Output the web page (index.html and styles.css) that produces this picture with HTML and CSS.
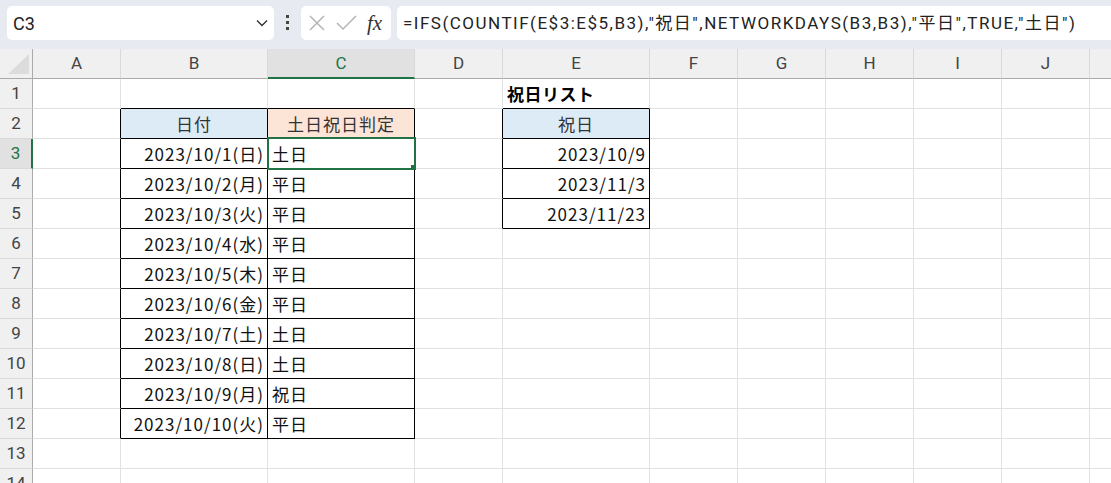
FILE: index.html
```html
<!DOCTYPE html>
<html lang="ja">
<head>
    <meta charset="UTF-8">
    <meta name="viewport" content="width=device-width, initial-scale=1.0">
    <title>土日祝日判定</title>
    <link rel="stylesheet" href="styles.css">
</head>
<body>

<div class="topbar">
    <div class="namebox">
        <span>C3</span>
        <svg class="chevron" width="12" height="8" viewBox="0 0 12 8"><path d="M1 1.5 L6 6.5 L11 1.5" fill="none" stroke="#333" stroke-width="1.4"/></svg>
    </div>
    <div class="dots"><i></i><i></i><i></i></div>
    <div class="fxbox">
        <svg width="18" height="18" viewBox="0 0 18 18"><path d="M2 2 L16 16 M16 2 L2 16" stroke="#b5b5b5" stroke-width="1.5" fill="none"/></svg>
        <svg width="21" height="18" viewBox="0 0 21 18"><path d="M1 9 L7 15 L20 2" stroke="#b5b5b5" stroke-width="1.5" fill="none"/></svg>
        <span class="fx">fx</span>
    </div>
    <div class="formula">=IFS(COUNTIF(E$3:E$5,B3),"祝日",NETWORKDAYS(B3,B3),"平日",TRUE,"土日")</div>
</div>

<div class="sheet" id="sheet">
    <!-- ячейки строятся скриптом -->
    <div class="sel"><i class="handle"></i></div>
</div>

<script>
    // последний столбец виден лишь краем, без буквы
    const cols = ['A', 'B', 'C', 'D', 'E', 'F', 'G', 'H', 'I', 'J', ''];
    const rowCount = 14;

    const days = ['日', '月', '火', '水', '木', '金', '土', '日', '月', '火'];
    const kinds = ['土日', '平日', '平日', '平日', '平日', '平日', '土日', '土日', '祝日', '平日'];

    // значения ячеек
    const cells = {
        B2: { text: '日付', cls: 'c fill-blue' },
        C2: { text: '土日祝日判定', cls: 'c fill-orange' },
        E1: { text: '祝日リスト', cls: 'b' },
        E2: { text: '祝日', cls: 'c fill-blue' },
        E3: { text: '2023/10/9', cls: 'r' },
        E4: { text: '2023/11/3', cls: 'r' },
        E5: { text: '2023/11/23', cls: 'r' }
    };
    days.forEach((d, i) => {
        cells['B' + (i + 3)] = { text: '2023/10/' + (i + 1) + '(' + d + ')', cls: 'r' };
        cells['C' + (i + 3)] = { text: kinds[i], cls: '' };
    });

    // диапазоны с рамкой
    const ranges = [[1, 2, 2, 12], [4, 2, 4, 5]];

    function inRange(c, r) {
        return ranges.some(g => c >= g[0] && c <= g[2] && r >= g[1] && r <= g[3]);
    }

    const sheet = document.getElementById('sheet');
    const sel = sheet.querySelector('.sel');

    function add(cls, text) {
        const div = document.createElement('div');
        div.className = cls;
        div.textContent = text || '';
        sheet.insertBefore(div, sel);
    }

    add('corner');
    cols.forEach(c => add(c === 'C' ? 'colhead active' : 'colhead', c));

    for (let r = 1; r <= rowCount; r++) {
        add(r === 3 ? 'rowhead active' : 'rowhead', r);
        cols.forEach((c, ci) => {
            const item = cells[c + r] || { text: '', cls: '' };
            let cls = 'cell ' + item.cls;
            if (inRange(ci, r)) cls += ' bx';
            if (inRange(ci, r + 1)) cls += ' bt';
            if (inRange(ci + 1, r)) cls += ' bl';
            add(cls, item.text);
        });
    }
</script>

</body>
</html>
```

FILE: styles.css
```css
body {
    margin: 0;
    width: 1111px;
    height: 483px;
    overflow: hidden;
    background-color: #fff;
    font-family: Roboto, "Noto Sans CJK JP", sans-serif;
}

.topbar {
    display: flex;
    align-items: flex-start;
    height: 49px;
    padding: 6px 0 0 7px;
    box-sizing: border-box;
    background-color: #e7eaf0;
}

.namebox {
    display: flex;
    justify-content: space-between;
    align-items: center;
    width: 267px;
    height: 34px;
    padding: 0 6px 0 6px;
    box-sizing: border-box;
    background-color: #fff;
    border-radius: 5px;
    font-size: 18px;
    color: #222;
}

.dots {
    display: flex;
    flex-direction: column;
    align-items: center;
    gap: 3px;
    width: 27px;
    padding-top: 9px;
}

.dots i {
    width: 3px;
    height: 3px;
    background-color: #444;
}

.fxbox {
    display: flex;
    align-items: center;
    gap: 10px;
    width: 90px;
    height: 34px;
    padding-left: 7px;
    box-sizing: border-box;
    background-color: #fff;
    border-radius: 5px;
}

.fx {
    font-family: "Liberation Serif", serif;
    font-style: italic;
    font-size: 21px;
    color: #333;
}

.formula {
    flex: 1;
    height: 34px;
    margin: 0 -10px 0 6px;
    padding-left: 6px;
    background-color: #fff;
    border-radius: 5px;
    font-size: 17px;
    line-height: 34px;
    letter-spacing: 1.5px;
    color: #222;
    white-space: nowrap;
}

.sheet {
    position: relative;
    display: grid;
    grid-template-columns: 33px 88px 147px 147px 88px 147px 88px 88px 88px 88px 88px 88px;
    grid-auto-rows: 30px;
    width: 1111px;
    height: 434px;
    overflow: hidden;
}

.sheet > div {
    box-sizing: border-box;
    white-space: nowrap;
    overflow: hidden;
}

.corner {
    position: relative;
    background-color: #f0f0f0;
    border-right: 1px solid #ababab;
    border-bottom: 1px solid #ababab;
}

.corner::after {
    content: "";
    position: absolute;
    right: 3px;
    bottom: 4px;
    width: 0;
    height: 0;
    border-left: 21px solid transparent;
    border-bottom: 20px solid #dcdcdc;
}

.colhead {
    background-color: #f0f0f0;
    border-right: 1px solid #d9d9d9;
    border-bottom: 1px solid #ababab;
    text-align: center;
    font-size: 17px;
    line-height: 29px;
    color: #444;
}

.colhead.active {
    background-color: #e1e1e1;
    border-bottom: 2px solid #217346;
    color: #217346;
}

.rowhead {
    background-color: #f0f0f0;
    border-right: 1px solid #ababab;
    border-bottom: 1px solid #d9d9d9;
    text-align: center;
    font-size: 17px;
    line-height: 29px;
    color: #444;
}

.rowhead.active {
    background-color: #e1e1e1;
    border-right: 2px solid #217346;
    color: #217346;
}

.cell {
    padding: 0 4px;
    border-right: 1px solid #e1e1e1;
    border-bottom: 1px solid #e1e1e1;
    font-family: "Noto Sans CJK JP", sans-serif;
    font-size: 17px;
    line-height: 29px;
    letter-spacing: 1px;
    color: #111;
}

.cell.r {
    text-align: right;
    padding-right: 3px;
}

.cell.c {
    text-align: center;
    color: #333;
}

.cell.b {
    font-weight: bold;
    letter-spacing: 0.5px;
    color: #000;
}

.fill-blue {
    background-color: #ddebf7;
}

.fill-orange {
    background-color: #fce4d6;
}

.cell.bx {
    border-right-color: #000;
    border-bottom-color: #000;
}

.cell.bt {
    border-bottom-color: #000;
}

.cell.bl {
    border-right-color: #000;
}

/* выделенная ячейка C3 */
.sel {
    position: absolute;
    left: 267px;
    top: 88px;
    width: 149px;
    height: 33px;
    border: 2px solid #217346;
    box-sizing: border-box;
}

.handle {
    position: absolute;
    right: -4px;
    bottom: -4px;
    width: 6px;
    height: 6px;
    background-color: #217346;
    border: 1px solid #fff;
}
```
